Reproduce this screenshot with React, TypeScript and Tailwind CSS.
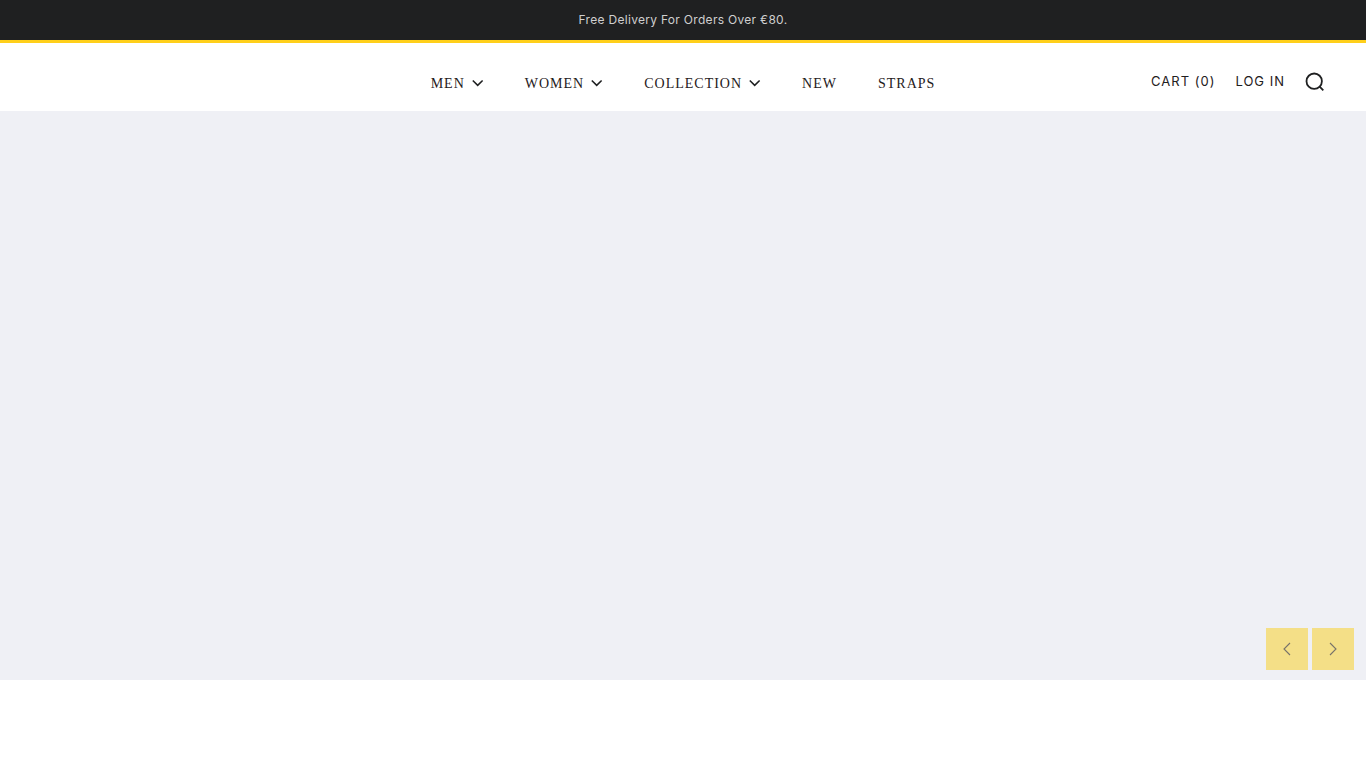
import { useState } from 'react'

interface NavItem {
  label: string
  hasMenu?: boolean
}

const navItems: NavItem[] = [
  { label: 'MEN', hasMenu: true },
  { label: 'WOMEN', hasMenu: true },
  { label: 'COLLECTION', hasMenu: true },
  { label: 'NEW' },
  { label: 'STRAPS' }
]

function ChevronDown() {
  return (
    <svg className="w-3 h-3" viewBox="0 0 12 12" fill="none" stroke="currentColor" strokeWidth="1.6" aria-hidden="true">
      <path d="M.8 2.5L5.7 7.3l4.9-4.8" />
    </svg>
  )
}

function SearchIcon() {
  return (
    <svg className="w-5 h-5" viewBox="0 0 20 20" fill="none" stroke="currentColor" strokeWidth="1.8" aria-hidden="true">
      <circle cx="9.2" cy="9.2" r="7.7" />
      <path d="M14.4 14.4l3.9 3.9" />
    </svg>
  )
}

function SlideButton({ direction, onClick }: { direction: 'prev' | 'next'; onClick: () => void }) {
  return (
    <button
      onClick={onClick}
      aria-label={direction === 'prev' ? 'Previous slide' : 'Next slide'}
      className="flex items-center justify-center w-[42px] h-[42px] bg-[#f4df87] text-[#77726a] cursor-pointer hover:bg-[#ffcf1a]"
    >
      <svg className="w-4 h-4" viewBox="0 0 16 16" fill="none" stroke="currentColor" strokeWidth="1.1" aria-hidden="true">
        <path d={direction === 'prev' ? 'M11 2L5 8l6 6' : 'M5 2l6 6-6 6'} />
      </svg>
    </button>
  )
}

export default function App() {
  const [, setSlide] = useState(0)

  return (
    <div className="bg-white text-[#1f2021]">
      <div className="flex items-center justify-center h-[43px] bg-[#1f2021] border-b-3 border-[#ffcf1a]">
        <p className="font-['Inter',sans-serif] text-xs text-[#cfcfcf] tracking-wide">Free Delivery For Orders Over €80.</p>
      </div>

      <header className="grid grid-cols-[1fr_auto_1fr] items-center h-17 px-[41px]">
        <nav aria-label="Main" className="col-start-2 flex items-center gap-[41px] pt-3.5">
          {navItems.map((item) => (
            <a
              key={item.label}
              href="#"
              className="flex items-center gap-[7px] font-['Liberation_Serif',serif] text-sm tracking-[1px]"
            >
              {item.label}
              {item.hasMenu && <ChevronDown />}
            </a>
          ))}
        </nav>

        <div className="flex items-center justify-end gap-5 pt-2.5 font-['Inter',sans-serif] text-[13px] tracking-[1px]">
          <a href="#">CART (0)</a>
          <a href="#">LOG IN</a>
          <button aria-label="Search" className="cursor-pointer">
            <SearchIcon />
          </button>
        </div>
      </header>

      <section aria-label="Slideshow" className="flex items-end justify-end gap-1 aspect-[12/5] px-3 py-2.5 bg-[#eff0f5]">
        <SlideButton direction="prev" onClick={() => setSlide((n) => n - 1)} />
        <SlideButton direction="next" onClick={() => setSlide((n) => n + 1)} />
      </section>
    </div>
  )
}
